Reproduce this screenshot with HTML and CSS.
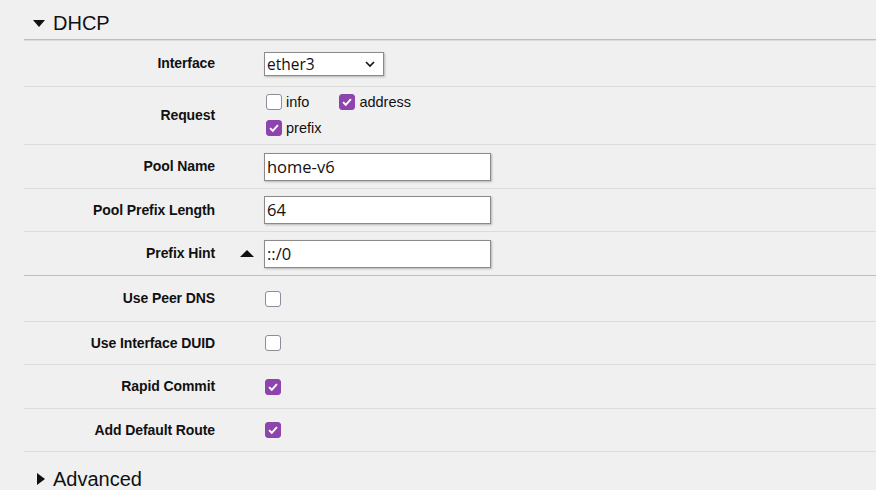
FILE: index.html
```html
<!DOCTYPE html>
<html>
<head>
<meta charset="utf-8">
<link rel="stylesheet" href="styles.css">
</head>
<body>
<div class="panel">
  <div class="section-head">
    <span class="tri-down"></span><span class="section-title">DHCP</span>
  </div>

  <div class="row r-iface">
    <div class="label">Interface</div>
    <div class="field">
      <div class="select"><span class="select-text">ether3</span>
        <svg class="chev" width="12" height="8" viewBox="0 0 12 8"><path d="M2 2 L6 6 L10 2" fill="none" stroke="#111" stroke-width="1.6"/></svg>
      </div>
    </div>
  </div>

  <div class="row r-request">
    <div class="label">Request</div>
    <div class="field checks">
      <div class="check-line">
        <span class="cb"></span><span class="cb-text">info</span>
        <span class="cb on cb-gap"><svg width="16" height="16" viewBox="0 0 16 16"><path d="M3.5 8.2 L6.6 11.2 L12.5 4.8" fill="none" stroke="#fff" stroke-width="2.2"/></svg></span><span class="cb-text">address</span>
      </div>
      <div class="check-line">
        <span class="cb on"><svg width="16" height="16" viewBox="0 0 16 16"><path d="M3.5 8.2 L6.6 11.2 L12.5 4.8" fill="none" stroke="#fff" stroke-width="2.2"/></svg></span><span class="cb-text">prefix</span>
      </div>
    </div>
  </div>

  <div class="row r-pool">
    <div class="label">Pool Name</div>
    <div class="field"><div class="input">home-v6</div></div>
  </div>

  <div class="row r-plen">
    <div class="label">Pool Prefix Length</div>
    <div class="field"><div class="input">64</div></div>
  </div>

  <div class="row r-hint strong">
    <div class="label">Prefix Hint</div>
    <span class="tri-up"></span>
    <div class="field"><div class="input">::/0</div></div>
  </div>

  <div class="row r-dns">
    <div class="label">Use Peer DNS</div>
    <div class="field"><span class="cb big"></span></div>
  </div>

  <div class="row r-duid">
    <div class="label">Use Interface DUID</div>
    <div class="field"><span class="cb big"></span></div>
  </div>

  <div class="row r-rapid">
    <div class="label">Rapid Commit</div>
    <div class="field"><span class="cb big on"><svg width="16" height="16" viewBox="0 0 16 16"><path d="M3.5 8.2 L6.6 11.2 L12.5 4.8" fill="none" stroke="#fff" stroke-width="2.2"/></svg></span></div>
  </div>

  <div class="row r-route">
    <div class="label">Add Default Route</div>
    <div class="field"><span class="cb big on"><svg width="16" height="16" viewBox="0 0 16 16"><path d="M3.5 8.2 L6.6 11.2 L12.5 4.8" fill="none" stroke="#fff" stroke-width="2.2"/></svg></span></div>
  </div>

  <div class="section-head adv">
    <span class="tri-right"></span><span class="section-title">Advanced</span>
  </div>
</div>
</body>
</html>
```

FILE: styles.css
```css
html, body {
  margin: 0;
  padding: 0;
  background: #f0f0f0;
  font-family: "Liberation Sans", Arial, sans-serif;
  color: #111;
}
.panel {
  margin-left: 24px;
  width: 852px;
}
.section-head {
  height: 40px;
  display: flex;
  align-items: center;
  padding-top: 8px;
  box-sizing: border-box;
  border-bottom: 1px solid #bdbdbd;
}
.section-title {
  font-size: 20px;
  margin-left: 8px;
  color: #111;
}
.tri-down {
  margin-left: 9px;
  width: 0;
  height: 0;
  border-left: 6.5px solid transparent;
  border-right: 6.5px solid transparent;
  border-top: 7px solid #111;
}
.tri-right {
  margin-left: 13px;
  width: 0;
  height: 0;
  border-top: 6.5px solid transparent;
  border-bottom: 6.5px solid transparent;
  border-left: 8px solid #111;
}
.adv {
  border-bottom: none;
  height: 54px;
  padding-top: 0;
}
.row {
  display: flex;
  align-items: center;
  border-top: 1px solid #dcdcdc;
  box-sizing: border-box;
}
.row.strong {
  border-bottom: 1px solid #bdbdbd;
}
.row.r-route { border-bottom: 1px solid #dcdcdc; }
.label {
  width: 191px;
  text-align: right;
  font-weight: bold;
  font-size: 14px;
  letter-spacing: -0.1px;
  flex: none;
  margin-top: -1px;
}
.field {
  margin-left: 49px;
  display: flex;
  align-items: center;
}
.r-hint .field { margin-left: 10px; }
.tri-up {
  margin-left: 25px;
  width: 0;
  height: 0;
  border-left: 7px solid transparent;
  border-right: 7px solid transparent;
  border-bottom: 7px solid #111;
}
.r-iface { height: 46px; }
.r-request { height: 58px; }
.r-pool { height: 44px; }
.r-plen { height: 43px; }
.r-hint { height: 45px; }
.r-dns { height: 45px; border-top: none; }
.r-duid { height: 43px; }
.r-rapid { height: 44px; }
.r-route { height: 44px; }

.select {
  width: 120px;
  height: 24px;
  box-sizing: border-box;
  background: #fff;
  border: 1px solid #8a8a8a;
  box-shadow: 1px 1px 2px rgba(0,0,0,0.25);
  display: flex;
  align-items: center;
  justify-content: space-between;
  padding: 0 7px 0 2px;
  margin-top: 1px;
}
.select-text {
  font-family: "Open Sans", "Noto Sans", sans-serif;
  font-size: 15.5px;
}
.chev { display: block; }
.input {
  width: 227px;
  height: 28px;
  box-sizing: border-box;
  background: #fff;
  border: 1px solid #8a8a8a;
  box-shadow: 1px 1px 2px rgba(0,0,0,0.25);
  font-family: "Open Sans", "Noto Sans", sans-serif;
  font-size: 16.5px;
  line-height: 26px;
  padding-left: 2px;
}
.checks {
  flex-direction: column;
  align-items: flex-start;
  gap: 10px;
  margin-left: 51px;
  margin-top: -1px;
}
.check-line {
  display: flex;
  align-items: center;
}
.cb {
  width: 16px;
  height: 16px;
  box-sizing: border-box;
  border: 1px solid #8c8c9a;
  border-radius: 3px;
  background: #fff;
  display: inline-flex;
  align-items: center;
  justify-content: center;
  flex: none;
}
.cb svg { display: block; }
.cb.on {
  background: #8e44ad;
  border-color: #8e44ad;
}
.cb.big { margin-left: 1px; }
.cb-gap { margin-left: 30px; }
.cb-text {
  font-size: 14.5px;
  margin-left: 4px;
  color: #111;
}
```
